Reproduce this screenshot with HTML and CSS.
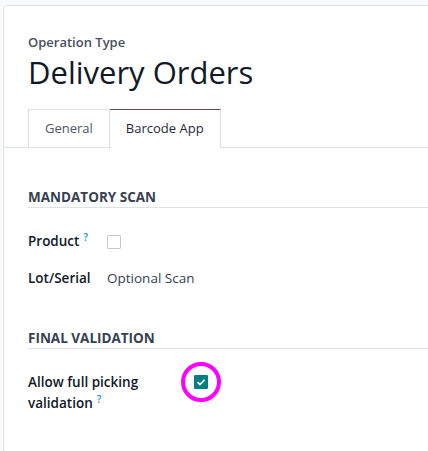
FILE: index.html
```html
<!DOCTYPE html>
<html lang="en">
<head>
  <meta charset="UTF-8">
  <meta name="viewport" content="width=device-width, initial-scale=1.0">
  <title>Operation Type - Delivery Orders</title>
  <link rel="stylesheet" href="styles.css">
</head>
<body>
  <div class="sheet">
    <div class="title">
      <div class="subtitle">Operation Type</div>
      <h1>Delivery Orders</h1>
    </div>

    <ul class="tabs">
      <li class="tab">General</li>
      <li class="tab active">Barcode App</li>
    </ul>

    <div class="content">
      <div class="group">
        <div class="group-title">Mandatory Scan</div>
        <div class="fields fields-narrow">
          <div class="label">Product<span class="help">?</span></div>
          <div class="value"><span class="checkbox"></span></div>
          <div class="label">Lot/Serial</div>
          <div class="value">Optional Scan</div>
        </div>
      </div>

      <div class="group">
        <div class="group-title">Final Validation</div>
        <div class="fields fields-wide">
          <div class="label">Allow full picking validation<span class="help">?</span></div>
          <div class="value">
            <span class="highlight">
              <span class="checkbox checked">
                <svg width="8" height="7" viewBox="0 0 8 7"><path d="M1 3.6 L3 5.5 L7 1.3" fill="none" stroke="#fff" stroke-width="1.8" stroke-linecap="round" stroke-linejoin="round"/></svg>
              </span>
            </span>
          </div>
        </div>
      </div>
    </div>
  </div>
</body>
</html>
```

FILE: styles.css
```css
html, body {
  margin: 0;
  height: 100%;
  overflow: hidden;
}

body {
  background-color: #f9fafb;
  font-family: "Open Sans", "Noto Sans", Arial, sans-serif;
  color: #374151;
  padding: 5px 0 0 3px;
  box-sizing: border-box;
}

.sheet {
  width: 700px;
  height: 480px;
  background-color: #fff;
  border: 1px solid #dee2e6;
  border-radius: 4px 0 0 0;
}

.title {
  padding: 26px 24px 0 24px;
}

.subtitle {
  font-size: 13px;
  font-weight: 600;
  color: #4b4f5d;
  line-height: 20px;
}

h1 {
  margin: 0;
  font-size: 31px;
  font-weight: 400;
  color: #111827;
  line-height: 40px;
}

.tabs {
  display: flex;
  list-style: none;
  margin: 17px 0 0 0;
  padding: 0 0 0 24px;
  border-bottom: 1px solid #dee2e6;
}

.tab {
  font-size: 13px;
  padding: 0 16px;
  height: 37px;
  line-height: 37px;
  border: 1px solid #dee2e6;
  border-bottom: none;
  margin-bottom: -1px;
  color: #4b5563;
}

.tab + .tab {
  border-left: none;
}

.tab.active {
  border-top-color: #5e4a5a;
  background-color: #fff;
  color: #1f2937;
  height: 38px;
}

.content {
  padding: 39px 0 0 24px;
}

.group {
  margin-bottom: 39px;
}

.group-title {
  font-size: 13.5px;
  font-weight: 700;
  text-transform: uppercase;
  color: #374151;
  line-height: 20px;
  border-bottom: 1px solid #dee2e6;
  margin-bottom: 23px;
}

.fields {
  display: grid;
  row-gap: 16px;
  align-items: start;
}

.fields-narrow {
  grid-template-columns: 79px 1fr;
}

.fields-wide {
  grid-template-columns: 166px 1fr;
  width: 300px;
}

.label {
  font-size: 13.5px;
  font-weight: 600;
  color: #111827;
  line-height: 21px;
}

.value {
  font-size: 13.5px;
  color: #374151;
  line-height: 21px;
  display: flex;
  align-items: center;
  min-height: 21px;
}

.help {
  display: inline-block;
  font-size: 10px;
  line-height: 10px;
  color: #1f8dc7;
  font-weight: 600;
  margin-left: 4px;
  vertical-align: top;
  position: relative;
  top: 1px;
}

.checkbox {
  display: inline-flex;
  align-items: center;
  justify-content: center;
  width: 14px;
  height: 14px;
  box-sizing: border-box;
  border: 1px solid #c4c7cc;
  border-radius: 1px;
  background-color: #fff;
}

.checkbox.checked {
  background-color: #017e84;
  border-color: #017e84;
}

.highlight {
  position: relative;
  display: inline-flex;
  align-items: center;
  justify-content: center;
  width: 40px;
  height: 40px;
  margin: -10px 0 0 -13px;
  box-sizing: border-box;
  border: 4px solid #ff00ff;
  border-radius: 50%;
}
```
